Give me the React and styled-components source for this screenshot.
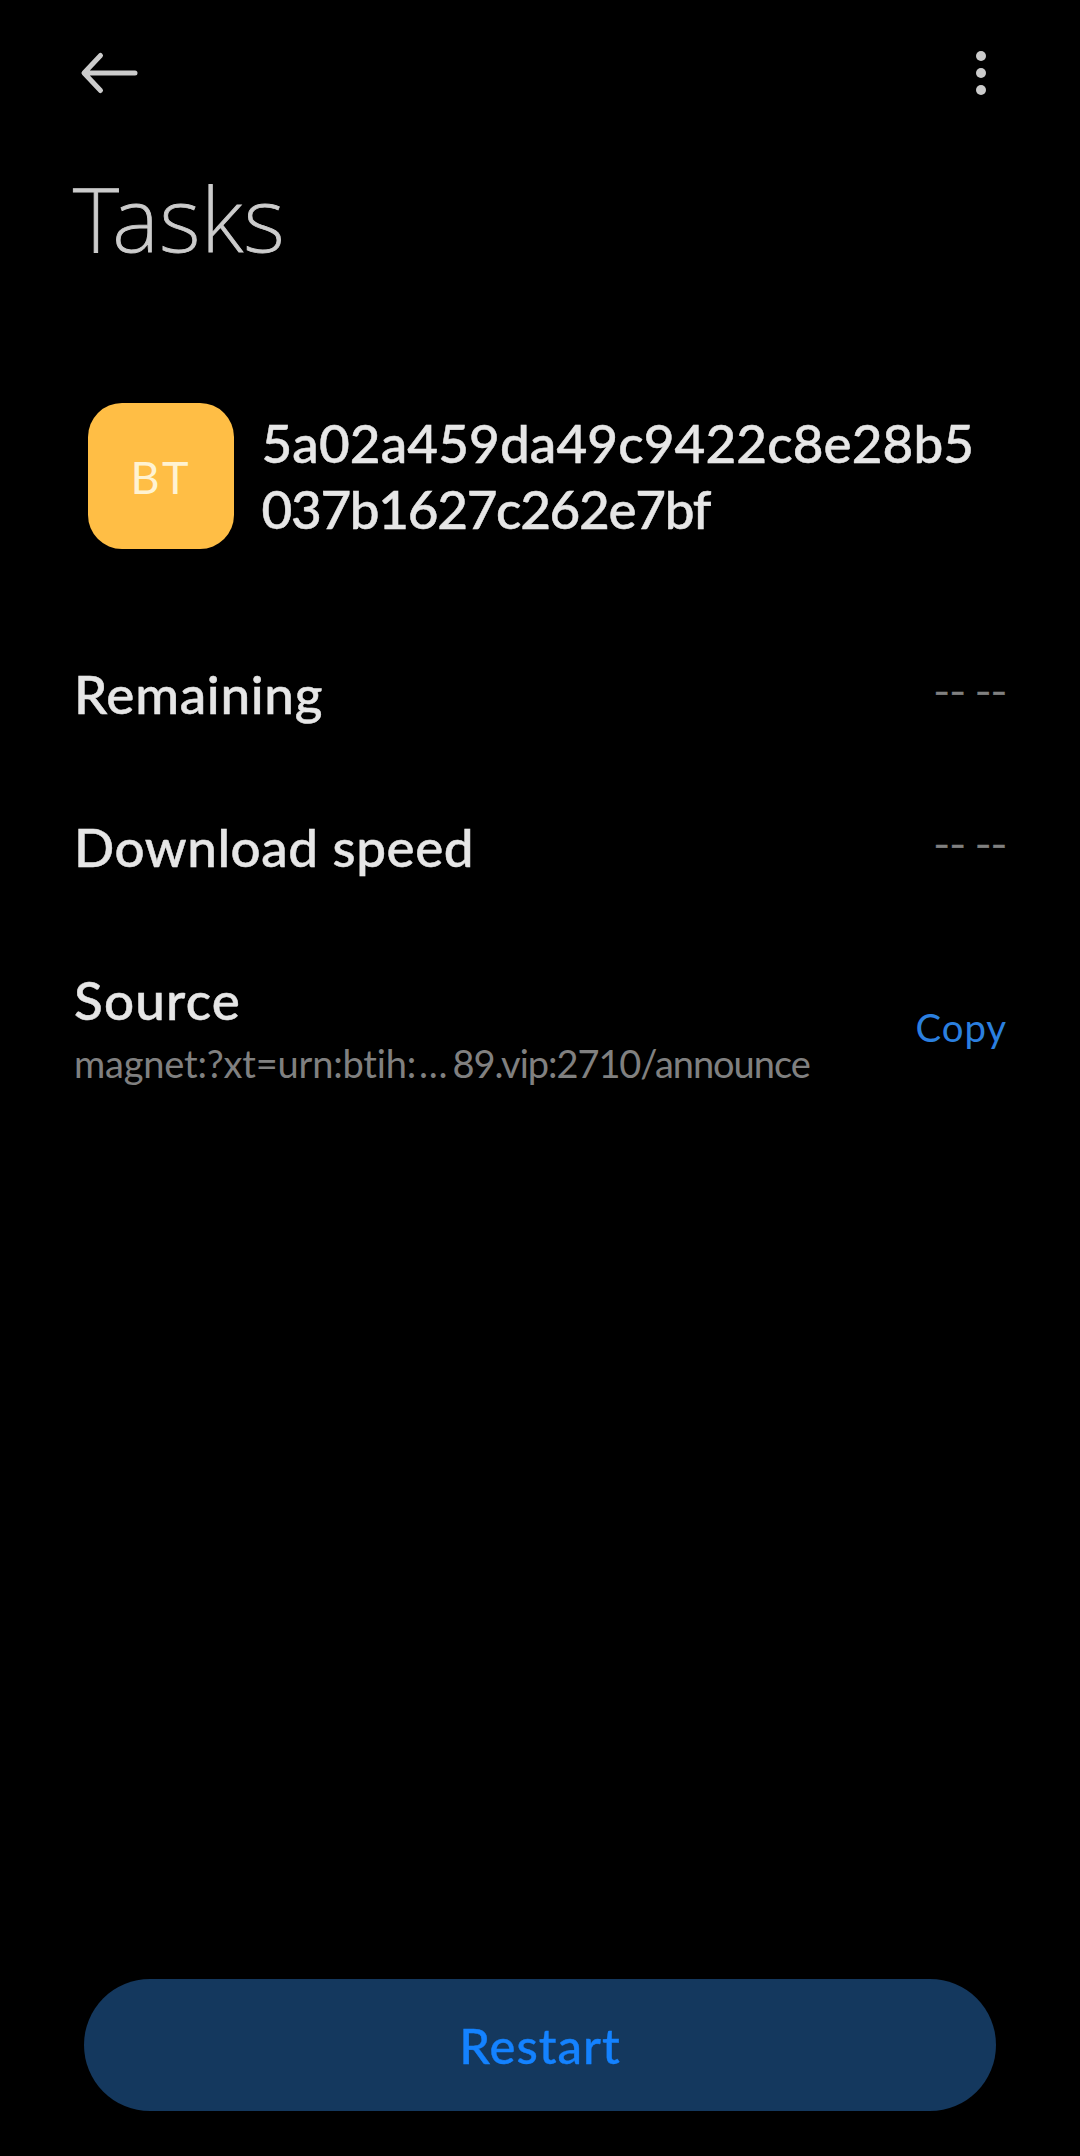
import React from 'react'
import styled, { createGlobalStyle } from 'styled-components'

const GlobalStyle = createGlobalStyle`
  body {
    margin: 0;
    background-color: #000;
  }
`
const Screen = styled.div`
  display: flex;
  flex-direction: column;
  box-sizing: border-box;
  height: 2156px;
  padding-bottom: 45px;
  background-color: #000;
  color: #e6e6e6;
  font-family: Lato, 'Noto Sans', sans-serif;
`
const Toolbar = styled.header`
  display: flex;
  justify-content: space-between;
  align-items: center;
  height: 146px;
  padding: 0 69px 0 78px;
`
const IconButton = styled.button`
  display: flex;
  padding: 0;
  border: none;
  background: none;
  color: #cccccc;
`
const Title = styled.h1`
  margin: 17px 0 0;
  padding: 0 73px;
  color: #cccccc;
  font-family: 'Noto Sans', sans-serif;
  font-size: 89px;
  font-weight: 200;
  line-height: 110px;
  letter-spacing: 0.6px;
  -webkit-text-stroke: 0.9px;
`
const File = styled.section`
  display: flex;
  align-items: center;
  gap: 27.5px;
  margin-top: 130px;
  padding: 0 88px;
`
const FileIcon = styled.div`
  display: flex;
  justify-content: center;
  align-items: center;
  box-sizing: border-box;
  width: 146px;
  height: 146px;
  padding: 2px 0 0;
  border-radius: 34px;
  background-color: #ffbe45;
  color: #fff3d2;
  font-size: 45px;
  letter-spacing: 3px;
`
const FileName = styled.div`
  padding-bottom: 1px;
  font-size: 53px;
  font-weight: 500;
  line-height: 66px;
  white-space: nowrap;
  -webkit-text-stroke: 0.5px;
`
const Line = styled.div`
  letter-spacing: ${(props) => props.$spacing}px;
`
const Rows = styled.section`
  margin-top: 68px;
  padding: 0 74px;
`
const Row = styled.div`
  display: flex;
  justify-content: space-between;
  align-items: center;
  height: 153px;
`
const SourceRow = styled(Row)`
  height: auto;
  padding-top: 44px;
`
const Label = styled.div`
  font-size: 53px;
  font-weight: 500;
  line-height: 66px;
  letter-spacing: ${(props) => props.$spacing || 0.7}px;
  -webkit-text-stroke: 0.5px;
`
const Value = styled.div`
  padding-bottom: 5px;
  margin-right: -1px;
  color: #808080;
  font-family: Inter, sans-serif;
  font-size: 34.5px;
  -webkit-text-stroke: 0.5px;
`
const Link = styled.div`
  display: flex;
  margin-top: 7px;
  color: #808080;
  font-size: 38px;
  line-height: 46px;
`
const LinkHead = styled.span`
  letter-spacing: -0.2px;
`
const LinkTail = styled.span`
  letter-spacing: -1.05px;
`
const Ellipsis = styled.span`
  padding: 0 5px 0 3px;
`
const CopyButton = styled.button`
  margin-right: -1px;
  padding: 0;
  border: none;
  background: none;
  color: #2b7fdf;
  font-family: inherit;
  font-size: 38.4px;
  line-height: 46px;
  letter-spacing: 0.9px;
`
const RestartButton = styled.button`
  height: 132px;
  margin: auto 84px 0;
  padding: 0 0 1px;
  border: none;
  border-radius: 66px;
  background-color: #14385e;
  color: #1482ff;
  font-family: inherit;
  font-size: 49px;
  font-weight: 500;
  letter-spacing: 1px;
  -webkit-text-stroke: 0.4px;
`

function BackIcon() {
  return (
    <svg width="64" height="48" viewBox="0 0 64 48" fill="none" stroke="currentColor" strokeWidth="5" strokeLinecap="round" strokeLinejoin="round">
      <path d="M22.5 6.5 6 24l16.5 17.5M7 24h50" />
    </svg>
  )
}

function MoreIcon() {
  return (
    <svg width="60" height="48" viewBox="0 0 60 48" fill="currentColor">
      <circle cx="30" cy="7" r="5" />
      <circle cx="30" cy="24" r="5" />
      <circle cx="30" cy="41" r="5" />
    </svg>
  )
}

function App() {
  return (
    <Screen>
      <GlobalStyle />
      <Toolbar>
        <IconButton aria-label="Back">
          <BackIcon />
        </IconButton>
        <IconButton aria-label="More">
          <MoreIcon />
        </IconButton>
      </Toolbar>
      <Title>Tasks</Title>
      <File>
        <FileIcon>BT</FileIcon>
        <FileName>
          <Line $spacing={0.13}>5a02a459da49c9422c8e28b5</Line>
          <Line $spacing={-1.3}>037b1627c262e7bf</Line>
        </FileName>
      </File>
      <Rows>
        <Row>
          <Label>Remaining</Label>
          <Value>-- --</Value>
        </Row>
        <Row>
          <Label $spacing={0.55}>Download speed</Label>
          <Value>-- --</Value>
        </Row>
        <SourceRow>
          <div>
            <Label $spacing={1.2}>Source</Label>
            <Link>
              <LinkHead>magnet:?xt=urn:btih:</LinkHead>
              <Ellipsis>…</Ellipsis>
              <LinkTail>89.vip:2710/announce</LinkTail>
            </Link>
          </div>
          <CopyButton>Copy</CopyButton>
        </SourceRow>
      </Rows>
      <RestartButton>Restart</RestartButton>
    </Screen>
  )
}

export default App
